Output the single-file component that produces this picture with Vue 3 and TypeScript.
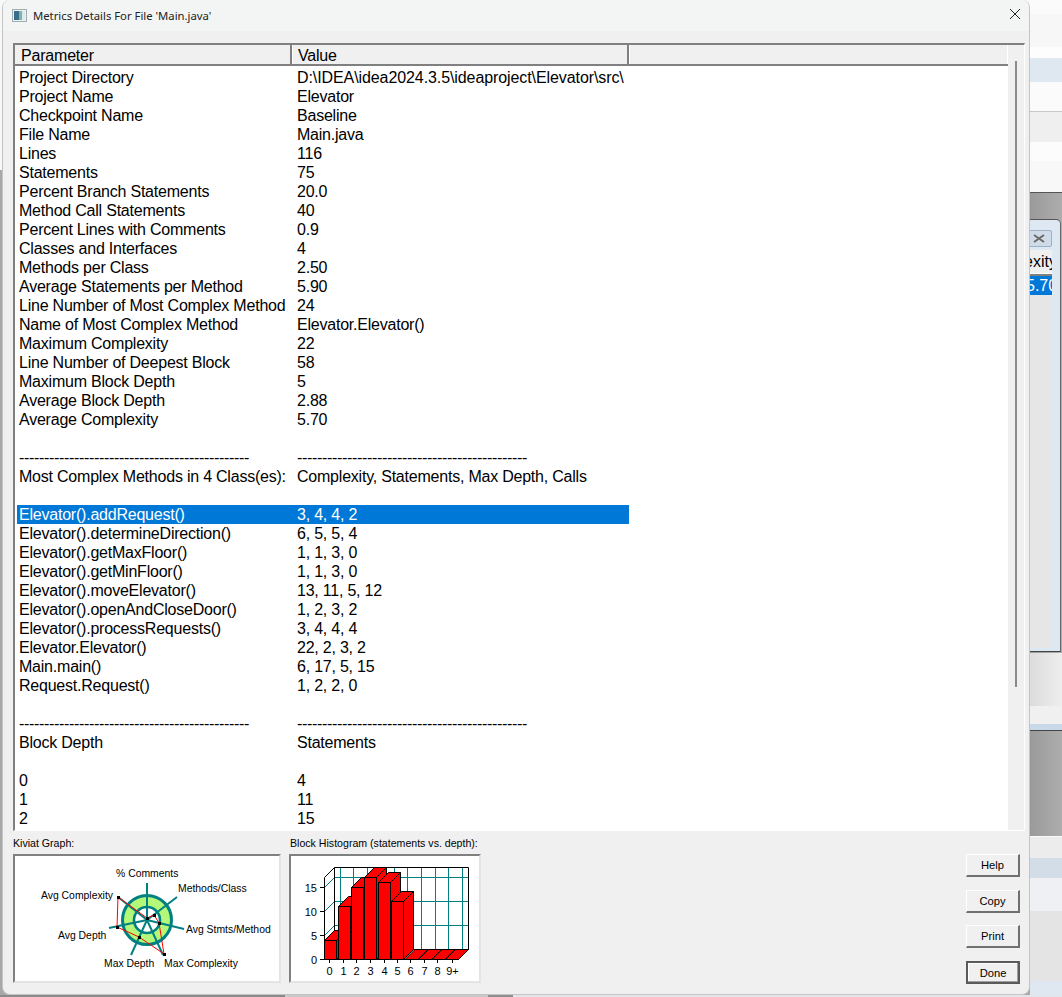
<template>
  <div class="desktop">
    <div class="top-row">
      <div class="window">
        <div class="titlebar">
          <svg class="app-icon" viewBox="0 0 15 13" width="15" height="13">
            <rect x="0.5" y="0.5" width="14" height="12" fill="#eef1f1" stroke="#a3adb0" />
            <rect x="2" y="2" width="5" height="9" fill="#3a6d8c" />
            <rect x="7" y="2" width="3" height="9" fill="#79b8a8" />
            <rect x="10" y="2" width="3" height="9" fill="#dfe8ea" />
          </svg>
          <span class="title-text">Metrics Details For File 'Main.java'</span>
          <svg class="close-icon" viewBox="0 0 12 12" width="12" height="12">
            <path d="M1 1 L11 11 M11 1 L1 11" stroke="#222" stroke-width="1" fill="none" />
          </svg>
        </div>

        <div class="content">
          <div class="list-frame">
            <div class="list-left">
              <div class="list-head">
                <div class="head-cell head-a">Parameter</div>
                <div class="head-cell head-b">Value</div>
                <div class="head-fill"></div>
              </div>
              <div class="rows">
                <div v-for="(row, i) in rows" :key="i" :class="['row', { selected: i === 23, dash: row[0] === dashes }]">
                  <span class="cell col-a">{{ row[0] }}</span>
                  <span class="cell col-b">{{ row[1] }}</span>
                </div>
              </div>
            </div>
            <div class="scroll-track"><div class="scroll-thumb"></div></div>
          </div>

          <div class="bottom">
            <div class="graph-box">
              <div class="graph-label">Kiviat Graph:</div>
              <div class="graph-frame kiviat">
                <svg viewBox="0 0 264 125" width="264" height="125">
                  <g transform="translate(0 -1)">
                    <circle cx="132" cy="65" r="24.5" fill="#b4f87a" stroke="#008080" stroke-width="3" />
                    <circle cx="132" cy="65" r="13" fill="#fff" stroke="#008080" stroke-width="2.6" />
                    <g stroke="#008080" stroke-width="2" fill="none">
                      <path d="M132 65 V28" />
                      <path d="M132 65 L162 42" />
                      <path d="M132 65 L169 74" />
                      <path d="M132 65 L148 100" />
                      <path d="M132 65 L116 100" />
                      <path d="M132 65 L94 73" />
                      <path d="M132 65 L103 42" />
                    </g>
                    <path d="M103 42 L132 63 L139 60 L144 68 L149 99 L124 82 L102 72 Z" fill="none" stroke="#ff0000" stroke-width="1" />
                    <g fill="#000">
                      <rect x="102" y="41" width="3" height="3" />
                      <rect x="131" y="62" width="3" height="3" />
                      <rect x="138" y="59" width="3" height="3" />
                      <rect x="143" y="67" width="3" height="3" />
                      <rect x="148" y="98" width="3" height="3" />
                      <rect x="123" y="81" width="3" height="3" />
                      <rect x="101" y="71" width="3" height="3" />
                    </g>
                    <g class="k-label">
                      <text x="101" y="22">% Comments</text>
                      <text x="163" y="37">Methods/Class</text>
                      <text x="171" y="78">Avg Stmts/Method</text>
                      <text x="149" y="112">Max Complexity</text>
                      <text x="89" y="112">Max Depth</text>
                      <text x="43" y="84">Avg Depth</text>
                      <text x="26" y="44">Avg Complexity</text>
                    </g>
                  </g>
                </svg>
              </div>
            </div>

            <div class="graph-box">
              <div class="graph-label hist-label">Block Histogram (statements vs. depth):</div>
              <div class="graph-frame histogram">
                <svg viewBox="0 0 188 125" width="188" height="125">
                  <g fill="none" stroke="#008080" stroke-width="1">
                    <path d="M43.5 21.5 H177 M43.5 45.5 H177 M43.5 69.5 H177" />
                    <path d="M49.5 12 V94 M62.5 12 V94 M76.5 12 V94 M89.5 12 V94 M103.5 12 V94 M116.5 12 V94 M130.5 12 V94 M144.5 12 V94 M157.5 12 V94 M171.5 12 V94" />
                    <path d="M33.5 31.5 L43.5 21.5 M33.5 55.5 L43.5 45.5 M33.5 79.5 L43.5 69.5" />
                  </g>
                  <path d="M33.5 103.5 V21.5 L43.5 11.5 H177.5 V93.5 H43.5 M43.5 11.5 V93.5" fill="none" stroke="#000" />
                  <path d="M29 103.5 H167.5 L177.5 93.5 M43.5 93.5 L33.5 103.5 M29 31.5 H33 M29 55.5 H33 M29 79.5 H33" fill="none" stroke="#000" />
                  <path v-for="x in [114, 127.5, 141, 154.5]" :key="x" :d="`M${x} 103.5 l10 -10 h13 l-10 10 Z`" fill="#ff0000" stroke="#000" />
                  <g v-for="b in bars" :key="b.x" stroke="#000" fill="#ff0000">
                    <path :d="`M${b.x + 12} ${b.y} l10 -10 v${103.5 - b.y} l-10 10 Z`" />
                    <path :d="`M${b.x} ${b.y} l10 -10 h12 l-10 10 Z`" />
                    <rect :x="b.x" :y="b.y" width="12" :height="103.5 - b.y" />
                  </g>
                  <path v-for="t in ticks" :key="t.label" :d="`M${t.x} 104 v3`" stroke="#000" fill="none" />
                  <g class="h-label">
                    <text x="26" y="36" text-anchor="end">15</text>
                    <text x="26" y="60" text-anchor="end">10</text>
                    <text x="26" y="84" text-anchor="end">5</text>
                    <text x="26" y="108" text-anchor="end">0</text>
                    <text v-for="t in ticks" :key="t.label" :x="t.x" y="119" text-anchor="middle">{{ t.label }}</text>
                  </g>
                </svg>
              </div>
            </div>

            <div class="buttons">
              <button class="btn">Help</button>
              <button class="btn">Copy</button>
              <button class="btn">Print</button>
              <button class="btn default">Done</button>
            </div>
          </div>
        </div>
      </div>

      <div class="behind">
        <div v-for="(b, i) in bands" :key="i" class="band" :style="{ height: b[0] + 'px', background: b[1] }"></div>
        <div class="mini-window">
          <div class="mini-close">
            <svg viewBox="0 0 12 9" width="12" height="9"><path d="M1 1 L11 8 M11 1 L1 8" stroke="#6a6a6a" stroke-width="2" fill="none" /></svg>
          </div>
          <div class="mini-table">
            <div class="mini-head">exity</div>
            <div class="mini-sel">5.70</div>
          </div>
        </div>
      </div>
    </div>
    <div class="bottom-strip">
      <div v-for="(s, i) in strip" :key="i" :style="{ width: s[0] + 'px', background: s[1] }"></div>
    </div>
  </div>
</template>

<script setup lang="ts">
const dashes = "----------------------------------------------";

const rows: [string, string][] = [
  ["Project Directory", "D:\\IDEA\\idea2024.3.5\\ideaproject\\Elevator\\src\\"],
  ["Project Name", "Elevator"],
  ["Checkpoint Name", "Baseline"],
  ["File Name", "Main.java"],
  ["Lines", "116"],
  ["Statements", "75"],
  ["Percent Branch Statements", "20.0"],
  ["Method Call Statements", "40"],
  ["Percent Lines with Comments", "0.9"],
  ["Classes and Interfaces", "4"],
  ["Methods per Class", "2.50"],
  ["Average Statements per Method", "5.90"],
  ["Line Number of Most Complex Method", "24"],
  ["Name of Most Complex Method", "Elevator.Elevator()"],
  ["Maximum Complexity", "22"],
  ["Line Number of Deepest Block", "58"],
  ["Maximum Block Depth", "5"],
  ["Average Block Depth", "2.88"],
  ["Average Complexity", "5.70"],
  ["", ""],
  [dashes, dashes],
  ["Most Complex Methods in 4 Class(es):", "Complexity, Statements, Max Depth, Calls"],
  ["", ""],
  ["Elevator().addRequest()", "3, 4, 4, 2"],
  ["Elevator().determineDirection()", "6, 5, 5, 4"],
  ["Elevator().getMaxFloor()", "1, 1, 3, 0"],
  ["Elevator().getMinFloor()", "1, 1, 3, 0"],
  ["Elevator().moveElevator()", "13, 11, 5, 12"],
  ["Elevator().openAndCloseDoor()", "1, 2, 3, 2"],
  ["Elevator().processRequests()", "3, 4, 4, 4"],
  ["Elevator.Elevator()", "22, 2, 3, 2"],
  ["Main.main()", "6, 17, 5, 15"],
  ["Request.Request()", "1, 2, 2, 0"],
  ["", ""],
  [dashes, dashes],
  ["Block Depth", "Statements"],
  ["", ""],
  ["0", "4"],
  ["1", "11"],
  ["2", "15"],
];

const bars = [
  { x: 33.5, y: 84.5 },
  { x: 47.5, y: 50.5 },
  { x: 60.5, y: 31.5 },
  { x: 73.5, y: 21.5 },
  { x: 87.5, y: 26.5 },
  { x: 100.5, y: 45.5 },
];

const ticks = [
  { x: 38.5, label: "0" },
  { x: 52.5, label: "1" },
  { x: 65.5, label: "2" },
  { x: 79.5, label: "3" },
  { x: 93.5, label: "4" },
  { x: 106.5, label: "5" },
  { x: 119.5, label: "6" },
  { x: 133.5, label: "7" },
  { x: 146.5, label: "8" },
  { x: 161.5, label: "9+" },
];

const gray = "linear-gradient(90deg, #9a9a9a, #adadad)";
const bands: [number, string][] = [
  [14, "#fbfbfb"],
  [33, "#f7f7f7"],
  [11, "#fdfdfd"],
  [24, "#dfe7f1"],
  [29, "#fbfbfb"],
  [1, "#c8c8c8"],
  [30, "#efefef"],
  [19, "#fcfcfc"],
  [31, "#f8f8f8"],
  [1, "#555555"],
  [460, gray],
  [53, "linear-gradient(90deg, #dcdcdc, #eeeeee)"],
  [18, "#f0f0f0"],
  [6, "#c9d9ea"],
  [1, "#444444"],
  [105, gray],
  [1, "#fafafa"],
  [21, "#ececec"],
  [20, "#d3dde8"],
  [33, "#eef0f3"],
  [70, "#e4e4e4"],
  [14, "#dfe7f1"],
];

const strip: [number, string][] = [
  [285, "#8a8a8a"],
  [203, "#c8c8c8"],
  [25, "#8f8f8f"],
  [549, "#e2e6ea"],
];
</script>

<style>
html,
body {
  margin: 0;
  background: #a8a8a8;
}
</style>

<style scoped>
.desktop {
  width: 1062px;
  height: 997px;
  overflow: hidden;
  display: flex;
  flex-direction: column;
  background: linear-gradient(#f8f8f8 170px, #a8a8a8 170px);
  font-family: "Liberation Sans", Arial, sans-serif;
}

.top-row {
  display: flex;
  height: 995px;
  flex: none;
}

.bottom-strip {
  display: flex;
  height: 2px;
  flex: none;
}

.window {
  flex: none;
  width: 1028px;
  margin-left: 2px;
  box-sizing: border-box;
  height: 995px;
  background: #f0f0f0;
  border: 1px solid #c4c4c4;
  border-top: none;
  border-radius: 8px;
  display: flex;
  flex-direction: column;
  overflow: hidden;
}

.titlebar {
  height: 31px;
  flex: none;
  background: #f3f5f5;
  display: flex;
  align-items: center;
  padding: 0 10px 0 9px;
  box-sizing: border-box;
}

.app-icon {
  flex: none;
  margin-top: -1px;
}

.title-text {
  margin-left: 6px;
  font-family: "Noto Sans", sans-serif;
  font-size: 11.3px;
  color: #222;
}

.close-icon {
  margin-left: auto;
  margin-right: -2px;
  margin-top: -3px;
}

.content {
  flex: 1;
  display: flex;
  flex-direction: column;
  padding: 12px 4px 0 10px;
  min-height: 0;
}

.list-frame {
  height: 788px;
  flex: none;
  border-top: 2px solid #808080;
  border-left: 2px solid #808080;
  border-right: 1px solid #fff;
  border-bottom: 1px solid #fff;
  display: flex;
  box-sizing: border-box;
}

.list-left {
  flex: 1;
  min-width: 0;
  display: flex;
  flex-direction: column;
}

.list-head {
  flex: none;
  height: 21px;
  box-sizing: border-box;
  display: flex;
  background: #f0f0f0;
  border-bottom: 2px solid #808080;
}

.head-cell {
  box-sizing: border-box;
  font-size: 16px;
  letter-spacing: -0.2px;
  line-height: 21px;
  padding-left: 6px;
  color: #000;
  border-right: 2px solid #808080;
  white-space: nowrap;
}

.head-a {
  width: 277px;
  flex: none;
}

.head-b {
  width: 337px;
  flex: none;
  padding-left: 5px;
  border-left: 1px solid #fff;
}

.head-fill {
  flex: 1;
  border-left: 1px solid #fff;
  border-right: 1px solid #fff;
}

.rows {
  flex: 1;
  min-height: 0;
  background: #fff;
  overflow: hidden;
  padding: 2px 0 0 2px;
}

.row {
  display: flex;
  height: 19px;
  width: 612px;
  font-size: 16px;
  letter-spacing: -0.22px;
  line-height: 20px;
  color: #000;
  white-space: nowrap;
}

.row:first-child .col-b {
  letter-spacing: -0.09px;
}

.row.selected {
  background: #0078d7;
  color: #fff;
}

.row.dash {
  letter-spacing: -0.33px;
}

.cell {
  box-sizing: border-box;
  height: 19px;
  overflow: hidden;
}

.col-a {
  padding-left: 2px;
  width: 280px;
  flex: none;
}

.col-b {
  width: 332px;
  flex: none;
}

.scroll-track {
  flex: none;
  width: 16px;
  background: #f0f0f0;
  padding: 16px 0 0 7px;
  box-sizing: border-box;
}

.scroll-thumb {
  width: 2px;
  height: 626px;
  background: #8a8a8a;
}

.bottom {
  flex: 1;
  display: flex;
  gap: 8px;
}

.graph-box {
  display: flex;
  flex-direction: column;
}

.graph-label {
  height: 23px;
  font-size: 10.6px;
  line-height: 24px;
  color: #000;
  white-space: nowrap;
}

.hist-label {
  padding-left: 1px;
}

.graph-frame {
  box-sizing: border-box;
  background: #fff;
  border-top: 2px solid #808080;
  border-left: 2px solid #808080;
  border-right: 2px solid #e4e4e4;
  border-bottom: 2px solid #e4e4e4;
  height: 129px;
}

.graph-frame svg {
  display: block;
}

.kiviat {
  width: 268px;
}

.histogram {
  width: 192px;
}

.k-label text {
  font-family: "Liberation Sans", Arial, sans-serif;
  font-size: 10.4px;
  fill: #000;
}

.h-label text {
  font-family: "Liberation Sans", Arial, sans-serif;
  font-size: 11px;
  fill: #000;
}

.buttons {
  margin-left: auto;
  margin-right: 5px;
  padding-top: 23px;
  display: flex;
  flex-direction: column;
  gap: 12.7px;
}

.btn {
  width: 54px;
  height: 23px;
  box-sizing: border-box;
  padding: 0;
  font-family: "Liberation Sans", Arial, sans-serif;
  font-size: 11.2px;
  background: #f0f0f0;
  color: #000;
  border-top: 1px solid #fff;
  border-left: 1px solid #fff;
  border-right: 2px solid #707070;
  border-bottom: 2px solid #707070;
}

.btn.default {
  border: 2px solid #5a5a5a;
  box-shadow: inset -1px -1px 0 #a0a0a0, inset 1px 1px 0 #fff;
}

.behind {
  position: relative;
  flex: 1;
  overflow: hidden;
  background: #a6a6a6;
}

.band {
  width: 100%;
}

.mini-window {
  position: absolute;
  left: 0;
  top: 219px;
  width: 31px;
  height: 433px;
  box-sizing: border-box;
  background: #dde8f2;
  border-right: 1px solid #666;
  border-bottom: 1px solid #444;
  border-top: 1px solid #555;
  border-radius: 0 5px 0 0;
}

.mini-close {
  position: absolute;
  left: -4px;
  top: 10px;
  width: 26px;
  height: 17px;
  background: #cfdbe8;
  border: 1px solid #9fb0c0;
  border-radius: 2px;
  display: flex;
  align-items: center;
  justify-content: center;
  box-sizing: border-box;
}

.mini-table {
  position: absolute;
  left: 0;
  top: 30px;
  width: 22px;
  height: 398px;
  background: #e6e6e6;
  overflow: hidden;
}

.mini-head {
  height: 26px;
  font-size: 16px;
  line-height: 24px;
  background: #f0f0f0;
  border-bottom: 2px solid #808080;
  box-shadow: inset 0 -1px 0 #fff;
  box-sizing: border-box;
  margin-left: -6px;
  white-space: nowrap;
}

.mini-sel {
  height: 19px;
  font-size: 16px;
  line-height: 19px;
  background: #0078d7;
  color: #fff;
  text-indent: -4px;
  white-space: nowrap;
}
</style>
